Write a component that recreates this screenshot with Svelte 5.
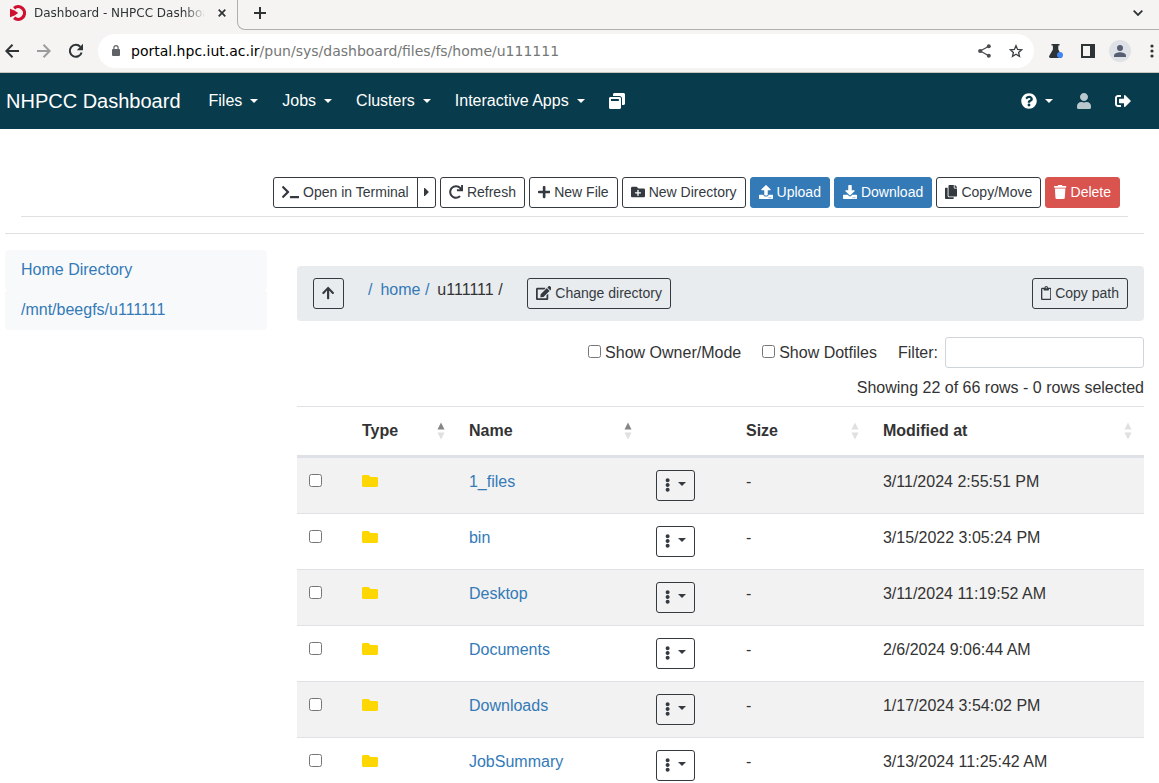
<script>
  const icons = {
    terminal: [640, 'M257.981 272.971L63.638 467.314c-9.373 9.373-24.569 9.373-33.941 0L7.029 444.647c-9.357-9.357-9.375-24.522-.04-33.901L161.011 256 6.99 101.255c-9.335-9.379-9.317-24.544.04-33.901l22.667-22.667c9.373-9.373 24.569-9.373 33.941 0L257.981 239.03c9.373 9.372 9.373 24.568 0 33.941zM640 456v-32c0-13.255-10.745-24-24-24H312c-13.255 0-24 10.745-24 24v32c0 13.255 10.745 24 24 24h304c13.255 0 24-10.745 24-24z'],
    caretRight: [192, 'M0 384.662V127.338c0-17.818 21.543-26.741 34.142-14.142l128.662 128.662c7.81 7.81 7.81 20.474 0 28.284L34.142 398.804C21.543 411.404 0 402.48 0 384.662z'],
    redo: [512, 'M500.33 0h-47.41a12 12 0 0 0-12 12.57l4 82.76A247.42 247.42 0 0 0 256 8C119.34 8 7.9 119.53 8 256.19 8.1 393.07 119.1 504 256 504a247.1 247.1 0 0 0 166.18-63.91 12 12 0 0 0 .48-17.43l-34-34a12 12 0 0 0-16.38-.55A176 176 0 1 1 402.1 157.8l-101.53-4.87a12 12 0 0 0-12.57 12v47.41a12 12 0 0 0 12 12h200.33a12 12 0 0 0 12-12V12a12 12 0 0 0-12-12z'],
    plus: [448, 'M416 208H272V64c0-17.67-14.33-32-32-32h-32c-17.67 0-32 14.33-32 32v144H32c-17.67 0-32 14.33-32 32v32c0 17.67 14.33 32 32 32h144v144c0 17.67 14.33 32 32 32h32c17.67 0 32-14.33 32-32V304h144c17.67 0 32-14.33 32-32v-32c0-17.67-14.33-32-32-32z'],
    folderPlus: [512, 'M464 128H272l-64-64H48C21.49 64 0 85.49 0 112v288c0 26.51 21.49 48 48 48h416c26.51 0 48-21.49 48-48V176c0-26.51-21.49-48-48-48zm-96 168c0 8.84-7.16 16-16 16h-72v72c0 8.84-7.16 16-16 16h-16c-8.84 0-16-7.16-16-16v-72h-72c-8.84 0-16-7.16-16-16v-16c0-8.84 7.16-16 16-16h72v-72c0-8.84 7.16-16 16-16h16c8.84 0 16 7.16 16 16v72h72c8.84 0 16 7.16 16 16v16z'],
    folder: [512, 'M464 128H272l-64-64H48C21.49 64 0 85.49 0 112v288c0 26.51 21.49 48 48 48h416c26.51 0 48-21.49 48-48V176c0-26.51-21.49-48-48-48z'],
    upload: [512, 'M296 384h-80c-13.3 0-24-10.7-24-24V192h-87.7c-17.8 0-26.7-21.5-14.1-34.1L242.3 5.7c7.5-7.5 19.8-7.5 27.3 0l152.2 152.2c12.6 12.6 3.7 34.1-14.1 34.1H320v168c0 13.3-10.7 24-24 24zm216-8v112c0 13.3-10.7 24-24 24H24c-13.3 0-24-10.7-24-24V376c0-13.3 10.7-24 24-24h136v8c0 30.9 25.1 56 56 56h80c30.9 0 56-25.1 56-56v-8h136c13.3 0 24 10.7 24 24zm-124 88c0-11-9-20-20-20s-20 9-20 20 9 20 20 20 20-9 20-20zm64 0c0-11-9-20-20-20s-20 9-20 20 9 20 20 20 20-9 20-20z'],
    download: [512, 'M216 0h80c13.3 0 24 10.7 24 24v168h87.7c17.8 0 26.7 21.5 14.1 34.1L269.7 378.3c-7.5 7.5-19.8 7.5-27.3 0L90.1 226.1c-12.6-12.6-3.7-34.1 14.1-34.1H192V24c0-13.3 10.7-24 24-24zm296 376v112c0 13.3-10.7 24-24 24H24c-13.3 0-24-10.7-24-24V376c0-13.3 10.7-24 24-24h146.7l49 49c20.1 20.1 52.5 20.1 72.6 0l49-49H488c13.3 0 24 10.7 24 24zm-124 88c0-11-9-20-20-20s-20 9-20 20 9 20 20 20 20-9 20-20zm64 0c0-11-9-20-20-20s-20 9-20 20 9 20 20 20 20-9 20-20z'],
    copy: [448, 'M320 448v40c0 13.255-10.745 24-24 24H24c-13.255 0-24-10.745-24-24V120c0-13.255 10.745-24 24-24h72v296c0 30.879 25.121 56 56 56h168zm0-344V0H152c-13.255 0-24 10.745-24 24v368c0 13.255 10.745 24 24 24h272c13.255 0 24-10.745 24-24V128H344c-13.2 0-24-10.8-24-24zm120.971-31.029L375.029 7.029A24 24 0 0 0 358.059 0H352v96h96v-6.059a24 24 0 0 0-7.029-16.97z'],
    trash: [448, 'M432 32H312l-9.4-18.7A24 24 0 0 0 281.1 0H166.8a23.72 23.72 0 0 0-21.4 13.3L136 32H16A16 16 0 0 0 0 48v32a16 16 0 0 0 16 16h416a16 16 0 0 0 16-16V48a16 16 0 0 0-16-16zM53.2 467a48 48 0 0 0 47.9 45h245.8a48 48 0 0 0 47.9-45L416 128H32z'],
    arrowUp: [448, 'M34.9 289.5l-22.2-22.2c-9.4-9.4-9.4-24.6 0-33.9L207 39c9.4-9.4 24.6-9.4 33.9 0l194.3 194.3c9.4 9.4 9.4 24.6 0 33.9L413 289.4c-9.5 9.5-25 9.3-34.3-.4L264 168.6V456c0 13.3-10.7 24-24 24h-32c-13.3 0-24-10.7-24-24V168.6L69.2 289.1c-9.3 9.8-24.8 10-34.3.4z'],
    edit: [576, 'M402.6 83.2l90.2 90.2c3.8 3.8 3.8 10 0 13.8L274.4 405.6l-92.8 10.3c-12.4 1.4-22.9-9.1-21.5-21.5l10.3-92.8L388.8 83.2c3.8-3.8 10-3.8 13.8 0zm162-22.9l-48.8-48.8c-15.2-15.2-39.9-15.2-55.2 0l-35.4 35.4c-3.8 3.8-3.8 10 0 13.8l90.2 90.2c3.8 3.8 10 3.8 13.8 0l35.4-35.4c15.2-15.3 15.2-40 0-55.2zM384 346.2V448H64V128h229.8c3.2 0 6.2-1.3 8.5-3.5l40-40c7.6-7.6 2.2-20.5-8.5-20.5H48C21.5 64 0 85.5 0 112v352c0 26.5 21.5 48 48 48h352c26.5 0 48-21.5 48-48V306.2c0-10.7-12.9-16-20.5-8.5l-40 40c-2.2 2.3-3.5 5.3-3.5 8.5z'],
    clipboard: [384, 'M336 64h-80c0-35.3-28.7-64-64-64s-64 28.7-64 64H48C21.5 64 0 85.5 0 112v352c0 26.5 21.5 48 48 48h288c26.5 0 48-21.5 48-48V112c0-26.5-21.5-48-48-48zM192 40c13.3 0 24 10.7 24 24s-10.7 24-24 24-24-10.7-24-24 10.7-24 24-24zm144 418c0 3.3-2.7 6-6 6H54c-3.3 0-6-2.7-6-6V118c0-3.3 2.7-6 6-6h42v36c0 6.6 5.4 12 12 12h168c6.6 0 12-5.4 12-12v-36h42c3.3 0 6 2.7 6 6z'],
    dots: [192, 'M96 184c39.8 0 72 32.2 72 72s-32.2 72-72 72-72-32.2-72-72 32.2-72 72-72zM24 80c0 39.8 32.2 72 72 72s72-32.2 72-72S135.8 8 96 8 24 40.2 24 80zm0 352c0 39.8 32.2 72 72 72s72-32.2 72-72-32.2-72-72-72-72 32.2-72 72z'],
    help: [512, 'M504 256c0 136.997-111.043 248-248 248S8 392.997 8 256C8 119.083 119.043 8 256 8s248 111.083 248 248zM262.655 90c-54.497 0-89.255 22.957-116.549 63.758-3.536 5.286-2.353 12.415 2.715 16.258l34.699 26.31c5.205 3.947 12.621 3.008 16.665-2.122 17.864-22.658 30.113-35.797 57.303-35.797 20.429 0 45.698 13.148 45.698 32.958 0 14.976-12.363 22.667-32.534 33.976C247.128 238.528 216 254.941 216 296v4c0 6.627 5.373 12 12 12h56c6.627 0 12-5.373 12-12v-1.333c0-28.462 83.186-29.647 83.186-106.667 0-58.002-60.165-102-116.531-102zM256 338c-25.365 0-46 20.635-46 46 0 25.364 20.635 46 46 46s46-20.636 46-46c0-25.364-20.635-46-46-46z'],
    user: [448, 'M224 256c70.7 0 128-57.3 128-128S294.7 0 224 0 96 57.3 96 128s57.3 128 128 128zm89.6 32h-16.7c-22.2 10.2-46.9 16-72.9 16s-50.6-5.8-72.9-16h-16.7C60.2 288 0 348.2 0 422.4V464c0 26.5 21.5 48 48 48h352c26.5 0 48-21.5 48-48v-41.6c0-74.2-60.2-134.4-134.4-134.4z'],
    signOut: [512, 'M497 273L329 441c-15 15-41 4.5-41-17v-96H152c-13.3 0-24-10.7-24-24v-96c0-13.3 10.7-24 24-24h136V88c0-21.4 25.9-32 41-17l168 168c9.3 9.4 9.3 24.6 0 34zM192 436v-40c0-6.6-5.4-12-12-12H96c-17.7 0-32-14.3-32-32V160c0-17.7 14.3-32 32-32h84c6.6 0 12-5.4 12-12V76c0-6.6-5.4-12-12-12H96c-53 0-96 43-96 96v192c0 53 43 96 96 96h84c6.6 0 12-5.4 12-12z'],
    windows: [512, 'M512 48v288c0 26.5-21.5 48-48 48h-48V176c0-44.1-35.9-80-80-80H128V48c0-26.5 21.5-48 48-48h288c26.5 0 48 21.5 48 48zM384 176v288c0 26.5-21.5 48-48 48H48c-26.5 0-48-21.5-48-48V176c0-26.5 21.5-48 48-48h288c26.5 0 48 21.5 48 48zm-68 28c0-6.6-5.4-12-12-12H76c-6.6 0-12 5.4-12 12v52h252v-52z']
  };

  const menus = ['Files', 'Jobs', 'Clusters', 'Interactive Apps'];

  const actions = [
    { icon: 'redo', label: 'Refresh', kind: 'outline' },
    { icon: 'plus', label: 'New File', kind: 'outline' },
    { icon: 'folderPlus', label: 'New Directory', kind: 'outline' },
    { icon: 'upload', label: 'Upload', kind: 'primary' },
    { icon: 'download', label: 'Download', kind: 'primary' },
    { icon: 'copy', label: 'Copy/Move', kind: 'outline' },
    { icon: 'trash', label: 'Delete', kind: 'danger' }
  ];

  const rows = [
    { name: '1_files', modified: '3/11/2024 2:55:51 PM' },
    { name: 'bin', modified: '3/15/2022 3:05:24 PM' },
    { name: 'Desktop', modified: '3/11/2024 11:19:52 AM' },
    { name: 'Documents', modified: '2/6/2024 9:06:44 AM' },
    { name: 'Downloads', modified: '1/17/2024 3:54:02 PM' },
    { name: 'JobSummary', modified: '3/13/2024 11:25:42 AM' }
  ];
</script>

{#snippet icon(name)}
  <svg class="icon" viewBox="0 0 {icons[name][0]} 512" aria-hidden="true"><path d={icons[name][1]} /></svg>
{/snippet}

{#snippet sortable(label, ascending)}
  <button class="sort" type="button">
    <span>{label}</span>
    <svg width="8" height="18" viewBox="0 0 8 18" aria-hidden="true">
      <path class:on={ascending} d="M.5 7.500 4 .5l3.500 7z" />
      <path d="M.5 10.500h7L4 17.500z" />
    </svg>
  </button>
{/snippet}

<div class="window">
  <header class="chrome">
    <div class="tabs">
      <div class="tab">
        <svg width="16" height="16" viewBox="0 0 16 16" aria-hidden="true">
          <path d="M4.1 3.2A6.3 6.3 0 1 1 4.1 12.8" fill="none" stroke="#d01030" stroke-width="3.2" />
          <path d="M0 3.8l4.6 1.6L8.2 8l-3.6 2.6L0 12.2z" fill="#d01030" />
        </svg>
        <span class="tab-title">Dashboard - NHPCC Dashboard</span>
        <button class="plain" type="button" aria-label="Close tab">
          <svg width="8" height="8" viewBox="0 0 8 8"><path d="M.7.7l6.6 6.6M7.3.7L.7 7.3" stroke="#2e3436" stroke-width="1.7" /></svg>
        </button>
      </div>
      <div class="tab-rest">
        <button class="plain" type="button" aria-label="New tab">
          <svg width="12" height="12" viewBox="0 0 12 12"><path d="M6 0v12M0 6h12" stroke="#2e3436" stroke-width="2" /></svg>
        </button>
        <button class="plain" type="button" aria-label="Search tabs">
          <svg width="10" height="6" viewBox="0 0 10 6"><path d="M.7.7L5 5 9.3.7" fill="none" stroke="#2e3436" stroke-width="1.8" /></svg>
        </button>
      </div>
    </div>
    <div class="toolbar">
      <div class="history">
        <button class="plain tool" type="button" aria-label="Back">
          <svg width="14" height="14" viewBox="0 0 14 14"><path d="M14 7H1.5M7.5.8L1.3 7l6.2 6.2" fill="none" stroke="#2e3436" stroke-width="2" /></svg>
        </button>
        <button class="plain tool" type="button" aria-label="Forward">
          <svg width="14" height="14" viewBox="0 0 14 14"><path d="M0 7h12.5M6.5.8L12.7 7l-6.2 6.2" fill="none" stroke="#9b9d9d" stroke-width="2" /></svg>
        </button>
        <button class="plain tool" type="button" aria-label="Reload">
          <svg width="16" height="16" viewBox="0 0 16 16"><path d="M13.6 9.4A6 6 0 1 1 12.4 3.9" fill="none" stroke="#2e3436" stroke-width="2" /><path d="M15 .8v6.4H8.8z" fill="#2e3436" /></svg>
        </button>
      </div>
      <div class="address">
        <svg width="8" height="12" viewBox="0 0 8 12" aria-hidden="true">
          <path d="M1 4h6a1 1 0 0 1 1 1v5a1 1 0 0 1-1 1H1a1 1 0 0 1-1-1V5a1 1 0 0 1 1-1z" fill="#5f6368" />
          <path d="M1.900 5V2.700a2.100 2.100 0 0 1 4.200 0V5" fill="none" stroke="#5f6368" stroke-width="1.2" />
        </svg>
        <div class="url"><span>portal.hpc.iut.ac.ir</span>/pun/sys/dashboard/files/fs/home/u111111</div>
        <button class="plain tool" type="button" aria-label="Share">
          <svg width="13" height="14" viewBox="0 0 13 14"><path d="M10.8 2.2L2.2 7l8.6 4.8" fill="none" stroke="#4a4e50" stroke-width="1.3" /><g fill="#4a4e50"><circle cx="10.8" cy="2.2" r="2" /><circle cx="2.2" cy="7" r="2.1" /><circle cx="10.8" cy="11.8" r="2" /></g></svg>
        </button>
        <button class="plain tool" type="button" aria-label="Bookmark">
          <svg width="14" height="14" viewBox="0 0 14 14"><path d="M7 1.700l1.600 3.700 4 .4-3 2.700.9 3.900L7 10.300l-3.500 2.100.9-3.900-3-2.700 4-.4z" fill="none" stroke="#3c4043" stroke-width="1.3" /></svg>
        </button>
      </div>
      <div class="extras">
        <button class="plain tool" type="button" aria-label="Labs">
          <svg width="14" height="14" viewBox="0 0 14 14"><path d="M2.500 0h8v1.600H9.300V5.500l3.500 6.500a1.400 1.400 0 0 1-1.200 2H1.400a1.400 1.400 0 0 1-1.200-2L3.900 5.500V1.600H2.500z" fill="#2e3436" /><circle cx="11" cy="11" r="3" fill="#4285f4" /></svg>
        </button>
        <button class="plain tool" type="button" aria-label="Side panel">
          <svg width="14" height="14" viewBox="0 0 14 14"><path d="M1 1h12v12H1z" fill="none" stroke="#2e3436" stroke-width="2" /><path d="M9 0h5v14H9z" fill="#2e3436" /></svg>
        </button>
        <button class="plain tool" type="button" aria-label="Profile">
          <svg width="22" height="22" viewBox="0 0 22 22"><circle cx="11" cy="11" r="11" fill="#dee1e6" /><circle cx="11" cy="8" r="3" fill="#565e73" /><path d="M5 17v-1.500c0-2.200 4-3.200 6-3.200s6 1 6 3.200V17z" fill="#565e73" /></svg>
        </button>
        <button class="plain tool" type="button" aria-label="Browser menu">
          <svg width="4" height="14" viewBox="0 0 4 14"><g fill="#2e3436"><circle cx="2" cy="2" r="1.600" /><circle cx="2" cy="7" r="1.600" /><circle cx="2" cy="12" r="1.600" /></g></svg>
        </button>
      </div>
    </div>
  </header>

  <nav class="navbar">
    <a class="brand" href="#home">NHPCC Dashboard</a>
    <div class="menus">
      {#each menus as menu}
        <a href="#menu">{menu}<i class="caret"></i></a>
      {/each}
      <a href="#sessions" aria-label="My Interactive Sessions">{@render icon('windows')}</a>
    </div>
    <div class="account">
      <a href="#help" aria-label="Help">{@render icon('help')}<i class="caret"></i></a>
      <a class="muted" href="#user" aria-label="User">{@render icon('user')}</a>
      <a href="#logout" aria-label="Log out">{@render icon('signOut')}</a>
    </div>
  </nav>

  <main>
    <div class="actions">
      <div class="split">
        <button class="btn outline" type="button">{@render icon('terminal')}Open in Terminal</button>
        <button class="btn outline toggle" type="button" aria-label="Choose a terminal">{@render icon('caretRight')}</button>
      </div>
      {#each actions as action}
        <button class="btn {action.kind}" type="button">{@render icon(action.icon)}{action.label}</button>
      {/each}
    </div>
    <hr />

    <div class="columns">
      <aside>
        <a href="#home">Home Directory</a>
        <a href="#mnt">/mnt/beegfs/u111111</a>
      </aside>

      <section>
        <div class="path">
          <button class="btn outline up" type="button" aria-label="Parent directory">{@render icon('arrowUp')}</button>
          <div class="crumbs">
            <a href="#root">/</a>
            <a href="#crumb">home /</a>
            <span>u111111 /</span>
          </div>
          <button class="btn outline" type="button">{@render icon('edit')}Change directory</button>
          <button class="btn outline copy-path" type="button">{@render icon('clipboard')}Copy path</button>
        </div>

        <div class="filters">
          <label><input type="checkbox" />Show Owner/Mode</label>
          <label><input type="checkbox" />Show Dotfiles</label>
          <label class="filter">Filter:<input type="text" /></label>
        </div>
        <p class="status">Showing 22 of 66 rows - 0 rows selected</p>

        <table>
          <colgroup>
            <col class="c-check" /><col class="c-type" /><col class="c-name" /><col class="c-menu" /><col class="c-size" /><col />
          </colgroup>
          <thead>
            <tr>
              <th></th>
              <th>{@render sortable('Type', true)}</th>
              <th>{@render sortable('Name', true)}</th>
              <th></th>
              <th>{@render sortable('Size', false)}</th>
              <th>{@render sortable('Modified at', false)}</th>
            </tr>
          </thead>
          <tbody>
            {#each rows as row}
              <tr>
                <td><input type="checkbox" aria-label="Select {row.name}" /></td>
                <td class="folder">{@render icon('folder')}</td>
                <td><a href="#file">{row.name}</a></td>
                <td class="menu-cell">
                  <button class="btn outline more" type="button" aria-label="Actions for {row.name}">{@render icon('dots')}<i class="caret"></i></button>
                </td>
                <td>-</td>
                <td>{row.modified}</td>
              </tr>
            {/each}
          </tbody>
        </table>
      </section>
    </div>
  </main>
</div>

<style>
  :global(body) { margin: 0; background: #fff; }
  .window {
    height: 100vh;
    display: flex;
    flex-direction: column;
    overflow: hidden;
    font: 16px/24px "Liberation Sans", Arial, sans-serif;
    color: #333;
  }
  .window *, .window *::before { box-sizing: border-box; }
  a { color: #337ab7; text-decoration: none; }
  button, input { font: inherit; color: inherit; margin: 0; }
  .plain { display: flex; padding: 0; border: 0; background: none; }

  .chrome { flex: none; background: #f5f4f2; font-family: "DejaVu Sans", sans-serif; color: #2e3436; border-bottom: 1px solid #c9c5c1; }
  .tabs { display: flex; height: 30px; }
  .tab { display: flex; align-items: center; width: 237px; padding: 0 11px 4px 10px; }
  .tab-title {
    flex: 1;
    margin: 0 14px 0 8px;
    overflow: hidden;
    white-space: nowrap;
    font-size: 12px;
    mask-image: linear-gradient(to right, #000 150px, transparent 172px);
  }
  .tab-rest {
    flex: 1;
    display: flex;
    align-items: center;
    justify-content: space-between;
    padding: 0 16px 4px 16px;
    border: solid #b0aeac;
    border-width: 0 0 1px 1px;
    border-bottom-left-radius: 8px;
  }
  .toolbar { display: flex; align-items: center; height: 42px; gap: 6px; }
  .tool { width: 32px; height: 32px; align-items: center; justify-content: center; }
  .history { display: flex; margin-left: -4px; }
  .address { flex: 1; display: flex; align-items: center; height: 34px; padding: 0 2px 0 14px; border-radius: 17px; background: #fff; }
  .url { flex: 1; margin-left: 11px; font-size: 14px; color: #757776; white-space: nowrap; }
  .url span { color: #000; }
  .extras { display: flex; margin-right: -9px; }

  .navbar { flex: none; display: flex; align-items: center; height: 56px; padding: 0 28px 0 6px; background: #083b4c; }
  .navbar a { display: flex; align-items: center; color: #fff; }
  .navbar a.muted { color: #b9c8cd; }
  .navbar .brand { font-size: 20px; margin-right: 28px; }
  .menus, .account { display: flex; gap: 24px; }
  .account { margin-left: auto; }
  .caret { margin: 0 0 1px 8px; border: solid transparent; border-width: 4px 4px 0; border-top-color: currentColor; }

  .icon { height: 1em; flex: none; fill: currentColor; }
  .navbar .icon { margin-bottom: 1px; }

  main { flex: 1; min-height: 0; padding: 48px 15px 0 5px; }
  .actions {
    display: flex;
    justify-content: flex-end;
    gap: 4px;
    margin: 0 16px;
    padding: 0 8px 8px;
    border-bottom: 1px solid #e0e0e0;
  }
  hr { margin: 16px 0; border: 0; border-top: 1px solid #e0e0e0; }
  .btn {
    display: inline-flex;
    align-items: center;
    justify-content: center;
    gap: 4px;
    padding: 4px 8px;
    border: 1px solid #343a40;
    border-radius: 3px;
    background: none;
    color: #343a40;
    font-size: 14px;
    line-height: 21px;
    white-space: nowrap;
  }
  .btn .icon { margin-bottom: 2px; }
  .primary { background: #337ab7; border-color: #337ab7; color: #fff; }
  .danger { background: #d9534f; border-color: #d9534f; color: #fff; }
  .split { display: flex; }
  .split .btn:first-child { border-radius: 3px 0 0 3px; }
  .split .toggle { margin-left: -1px; padding: 0 6px; border-radius: 0 3px 3px 0; }

  .columns { display: flex; gap: 30px; }
  aside { flex: 0 0 23%; display: flex; flex-direction: column; }
  aside a { padding: 8px 16px; border-radius: 4px; background: #f8f9fb; }
  section { flex: 1; min-width: 0; padding-top: 16px; }

  .path { display: flex; align-items: flex-start; padding: 12px 16px; border-radius: 4px; background: #e9ecef; }
  .btn.up { width: 31px; height: 31px; }
  .crumbs { display: flex; gap: 8px; margin: 0 24px; }
  .copy-path { margin-left: auto; }

  .filters { display: flex; align-items: center; justify-content: flex-end; gap: 21px; margin-top: 16px; }
  label { display: flex; align-items: center; gap: 4px; }
  .filter { gap: 7px; }
  input[type="checkbox"] { width: 13px; height: 13px; }
  label input[type="checkbox"] { margin-bottom: 2px; }
  input[type="text"] { width: 199px; height: 31px; padding: 4px 8px; border: 1px solid #ced4da; border-radius: 3px; background: #fff; }
  .status { margin: 8px 0 6px; text-align: right; }

  table { width: 100%; table-layout: fixed; border-collapse: separate; border-spacing: 0; }
  .c-check { width: 53px; }
  .c-type { width: 107px; }
  .c-name { width: 187px; }
  .c-menu { width: 90px; }
  .c-size { width: 137px; }
  th, td { padding: 12px; border-top: 1px solid #dee2e6; text-align: left; vertical-align: top; line-height: 24px; }
  th { border-bottom: 2px solid #dee2e6; }
  tbody tr:nth-child(odd) { background: #f2f2f2; }
  td:first-child { padding-top: 16px; line-height: 0; }
  .sort { display: flex; width: 100%; align-items: center; justify-content: space-between; padding: 0; border: 0; background: none; font-weight: bold; }
  .sort path { fill: #e0e0e0; }
  .sort path.on { fill: #858585; }
  td .icon { display: block; }
  .folder { padding-top: 15px; color: gold; }
  .menu-cell { line-height: 0; }
  .more { width: 39px; height: 31px; }
  .more .caret { margin: 0 0 3px 4px; }
</style>
